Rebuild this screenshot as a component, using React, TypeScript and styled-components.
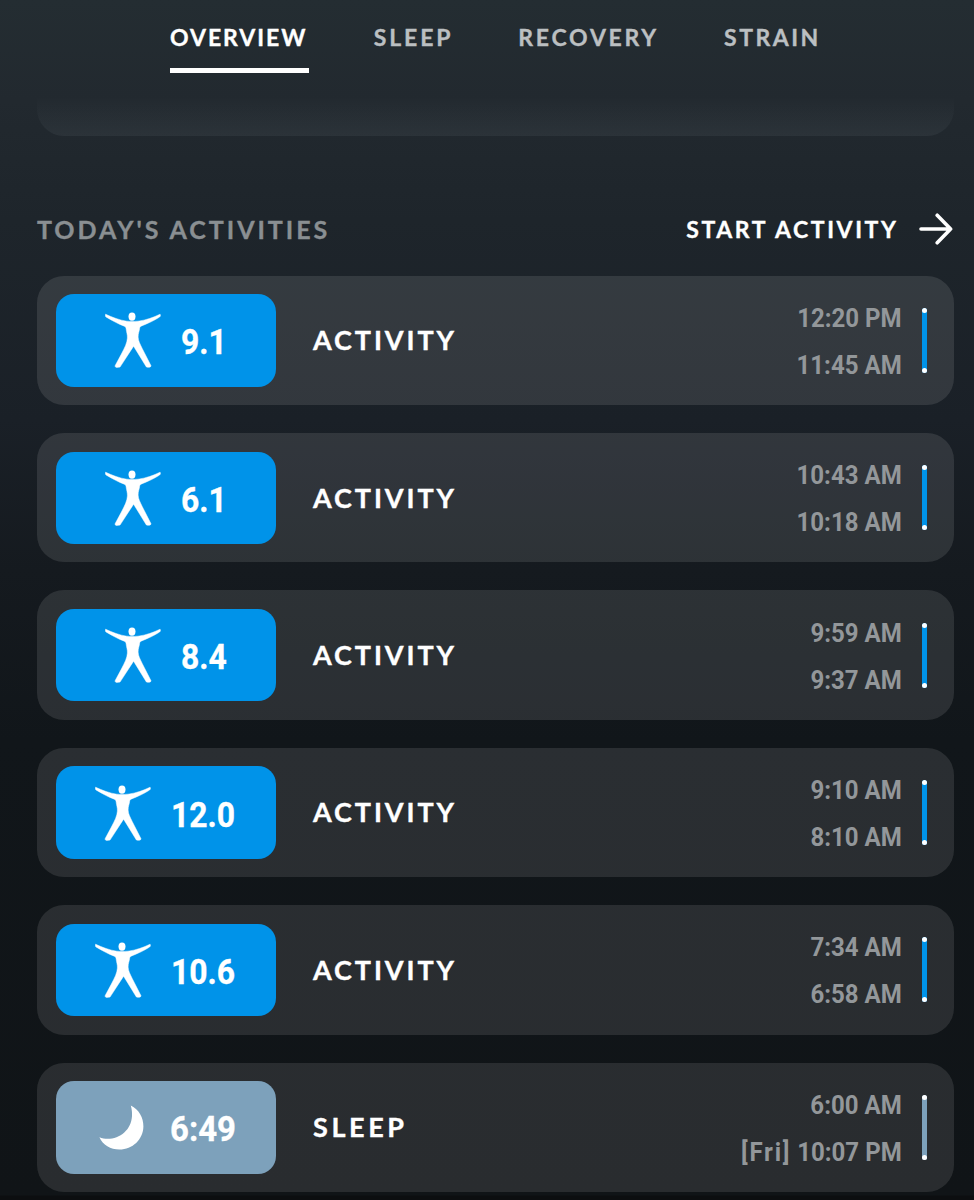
import React from "react";
import styled, { createGlobalStyle } from "styled-components";

const Global = createGlobalStyle`
  * { box-sizing: border-box; }
  html, body { margin: 0; padding: 0; }
  body {
    background: #101417;
    color: #fff;
    font-family: Lato, "Liberation Sans", sans-serif;
    font-weight: 700;
    -webkit-text-stroke: 0.35px currentColor;
  }
`;

const Screen = styled.main`
  height: 1200px;
  overflow: hidden;
  display: flex;
  flex-direction: column;
  background: linear-gradient(180deg, #242d32 0px, #22292f 100px, #1e252b 220px, #1a2027 420px, #151a1f 570px, #11161a 740px, #101417 1195px, #0c0e10 1196px);
`;

const Tabs = styled.nav`
  display: flex;
  height: 96px;
  padding: 20px 0 0 170px;
  gap: 65px;
  align-items: flex-start;
`;

const Tab = styled.a<{ $active?: boolean; $spacing: number }>`
  display: flex;
  flex-direction: column;
  height: 53px;
  padding-right: ${(p) => (p.$active ? 1.5 : 0)}px;
  font-size: 23px;
  line-height: 35px;
  white-space: nowrap;
  letter-spacing: ${(p) => p.$spacing}px;
  color: ${(p) => (p.$active ? "#fff" : "#bbbfc1")};
  border-bottom: 5px solid ${(p) => (p.$active ? "#fff" : "transparent")};
`;

const PreviousCard = styled.div`
  height: 40px;
  margin: 0 20px 0 37px;
  border-radius: 0 0 27px 27px;
  background: linear-gradient(180deg, rgba(225, 240, 250, 0), rgba(225, 240, 250, 0.055));
`;

const SectionHead = styled.header`
  display: flex;
  justify-content: space-between;
  align-items: center;
  height: 44px;
  margin: 71px 21px 24.7px 37px;
`;

const SectionTitle = styled.h2`
  margin: 0;
  font-size: 25px;
  line-height: 44px;
  letter-spacing: 2.95px;
  color: #8a8f92;
`;

const StartButton = styled.button`
  display: flex;
  align-items: center;
  gap: 20.5px;
  padding: 0;
  border: 0;
  background: none;
  color: #fff;
  font: inherit;
  font-size: 23px;
  letter-spacing: 2.6px;
`;

const List = styled.section`
  display: flex;
  flex-direction: column;
  gap: 28px;
  padding: 0 20px 0 37px;
`;

const Card = styled.article`
  display: flex;
  align-items: center;
  flex: none;
  height: 129.4px;
  padding: 0 27px 0 18.5px;
  border-radius: 27px;
  background: rgba(255, 255, 255, 0.105);
`;

const Badge = styled.div<{ $sleep?: boolean }>`
  display: flex;
  align-items: center;
  justify-content: center;
  gap: ${(p) => (p.$sleep ? 26 : 20)}px;
  width: 220px;
  height: 92.5px;
  padding-left: ${(p) => (p.$sleep ? 8 : 5)}px;
  border-radius: 18px;
  background: ${(p) => (p.$sleep ? "#7da1bb" : "#0093e9")};
`;

const Score = styled.span<{ $scale: number }>`
  padding-top: 6px;
  font-family: Roboto, "Liberation Sans", sans-serif;
  font-size: 35px;
  line-height: 42px;
  transform: scaleX(${(p) => p.$scale});
  transform-origin: left;
`;

const Name = styled.h3<{ $spacing: number }>`
  flex: 1;
  margin: 0 0 1.5px 37.5px;
  font-size: 27px;
  letter-spacing: ${(p) => p.$spacing}px;
`;

const Times = styled.div`
  display: flex;
  flex-direction: column;
  align-items: flex-end;
  padding-top: 3px;
  font-family: Roboto, "Liberation Sans", sans-serif;
  font-size: 26px;
  line-height: 47px;
  color: #93979a;
  -webkit-text-stroke: 0;
  transform: scaleX(0.925);
  transform-origin: right;
`;

const Day = styled.span`
  letter-spacing: 1.9px;
`;

const Span = styled.div<{ $sleep?: boolean }>`
  display: flex;
  flex-direction: column;
  justify-content: space-between;
  width: 5px;
  height: 65px;
  margin-left: 20px;
  border-radius: 3px;
  background: ${(p) => (p.$sleep ? "#7da1bb" : "#0093e9")};
  &::before, &::after {
    content: "";
    height: 5px;
    border-radius: 50%;
    background: #fff;
  }
`;

const Person = () => (
  <svg width="56" height="56" viewBox="0 0 56 56" fill="#fff" stroke="#fff" strokeWidth="0.5">
    <ellipse cx="27" cy="4.6" rx="3.5" ry="4.2" stroke="none" />
    <path d="M.6 2.2 C.1 3.4.3 4.6 1.4 5.2 C8 9 13.5 12 19.3 14.2 C20.8 14.8 21 15.8 21.2 17.3 C21.6 20.5 22.6 23 22.4 26 C22.2 31 19.5 36 16.4 42 L10.2 53.6 C9.8 54.8 10.6 55.4 11.8 55.4 L15 55.1 L28.6 34.2 L41.4 55 C43.4 55.5 46 55.4 46 53.8 L37.2 36.5 C35.3 32.5 33.2 29 33.1 25 C33.1 21.5 34.3 19 34.5 17.2 C34.6 15.2 35.1 14.6 36.6 13.9 C43 11.4 49.3 8.6 54.6 5 C55.5 4.3 55.7 3 55.1 2.2 C48.5 5.4 41 8.2 33 9.2 C29 9.6 25.5 9.6 21.8 9.2 C14.5 8.2 7.5 5.4 .6 2.2 Z" />
  </svg>
);

const Moon = () => (
  <svg width="45" height="45" viewBox="0 0 45 45" fill="#fff">
    <path d="M31.8 .5 C40 4.5 44.5 12.5 44.4 21.5 C44.2 34.5 33.5 44.5 20.5 44.5 C11.5 44.5 3.8 39.8 .4 32.2 C5.5 34.2 11.5 34.4 17.5 32.2 C29.5 27.7 36 15.5 31.8 .5 Z" />
  </svg>
);

const Arrow = () => (
  <svg width="34" height="32" viewBox="0 0 34 32" fill="none" stroke="#fff" strokeWidth="3.6" strokeLinecap="round" strokeLinejoin="round">
    <path d="M2 16 H31.6 M18.2 2.2 L31.6 16 L18.2 29.8" />
  </svg>
);

type Entry = { score: string; name: string; end: string; start: string; day?: string; sleep?: boolean };

const entries: Entry[] = [
  { score: "9.1", name: "ACTIVITY", end: "12:20 PM", start: "11:45 AM" },
  { score: "6.1", name: "ACTIVITY", end: "10:43 AM", start: "10:18 AM" },
  { score: "8.4", name: "ACTIVITY", end: "9:59 AM", start: "9:37 AM" },
  { score: "12.0", name: "ACTIVITY", end: "9:10 AM", start: "8:10 AM" },
  { score: "10.6", name: "ACTIVITY", end: "7:34 AM", start: "6:58 AM" },
  { score: "6:49", name: "SLEEP", end: "6:00 AM", day: "[Fri]", start: "10:07 PM", sleep: true },
];

export default function App() {
  return (
    <Screen>
      <Global />
      <Tabs>
        <Tab $active $spacing={1.95}>OVERVIEW</Tab>
        <Tab $spacing={2.85}>SLEEP</Tab>
        <Tab $spacing={2.75}>RECOVERY</Tab>
        <Tab $spacing={2.5}>STRAIN</Tab>
      </Tabs>
      <PreviousCard />
      <SectionHead>
        <SectionTitle>TODAY'S ACTIVITIES</SectionTitle>
        <StartButton>START ACTIVITY<Arrow /></StartButton>
      </SectionHead>
      <List>
        {entries.map((e) => (
          <Card key={e.end}>
            <Badge $sleep={e.sleep}>
              {e.sleep ? <Moon /> : <Person />}
              <Score $scale={e.sleep ? 0.94 : 0.91}>{e.score}</Score>
            </Badge>
            <Name $spacing={e.sleep ? 3.6 : 2.9}>{e.name}</Name>
            <Times>
              <span>{e.end}</span>
              <span>
                {e.day && <Day>{e.day}</Day>} {e.start}
              </span>
            </Times>
            <Span $sleep={e.sleep} />
          </Card>
        ))}
      </List>
    </Screen>
  );
}
